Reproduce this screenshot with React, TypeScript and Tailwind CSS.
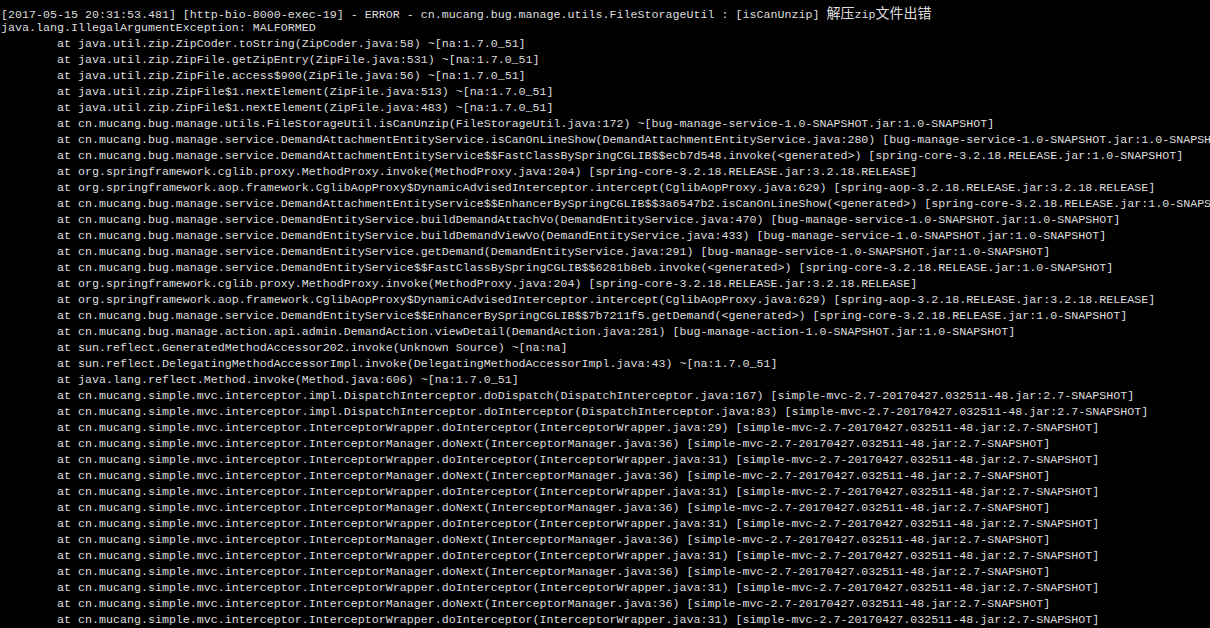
import React from 'react';

const T = '        ';

const head = '[2017-05-15 20:31:53.481] [http-bio-8000-exec-19] - ERROR - cn.mucang.bug.manage.utils.FileStorageUtil : [isCanUnzip] ';

const lines: string[] = [
    'java.lang.IllegalArgumentException: MALFORMED',
    'at java.util.zip.ZipCoder.toString(ZipCoder.java:58) ~[na:1.7.0_51]',
    'at java.util.zip.ZipFile.getZipEntry(ZipFile.java:531) ~[na:1.7.0_51]',
    'at java.util.zip.ZipFile.access$900(ZipFile.java:56) ~[na:1.7.0_51]',
    'at java.util.zip.ZipFile$1.nextElement(ZipFile.java:513) ~[na:1.7.0_51]',
    'at java.util.zip.ZipFile$1.nextElement(ZipFile.java:483) ~[na:1.7.0_51]',
    'at cn.mucang.bug.manage.utils.FileStorageUtil.isCanUnzip(FileStorageUtil.java:172) ~[bug-manage-service-1.0-SNAPSHOT.jar:1.0-SNAPSHOT]',
    'at cn.mucang.bug.manage.service.DemandAttachmentEntityService.isCanOnLineShow(DemandAttachmentEntityService.java:280) [bug-manage-service-1.0-SNAPSHOT.jar:1.0-SNAPSHOT]',
    'at cn.mucang.bug.manage.service.DemandAttachmentEntityService$$FastClassBySpringCGLIB$$ecb7d548.invoke(<generated>) [spring-core-3.2.18.RELEASE.jar:1.0-SNAPSHOT]',
    'at org.springframework.cglib.proxy.MethodProxy.invoke(MethodProxy.java:204) [spring-core-3.2.18.RELEASE.jar:3.2.18.RELEASE]',
    'at org.springframework.aop.framework.CglibAopProxy$DynamicAdvisedInterceptor.intercept(CglibAopProxy.java:629) [spring-aop-3.2.18.RELEASE.jar:3.2.18.RELEASE]',
    'at cn.mucang.bug.manage.service.DemandAttachmentEntityService$$EnhancerBySpringCGLIB$$3a6547b2.isCanOnLineShow(<generated>) [spring-core-3.2.18.RELEASE.jar:1.0-SNAPSHOT]',
    'at cn.mucang.bug.manage.service.DemandEntityService.buildDemandAttachVo(DemandEntityService.java:470) [bug-manage-service-1.0-SNAPSHOT.jar:1.0-SNAPSHOT]',
    'at cn.mucang.bug.manage.service.DemandEntityService.buildDemandViewVo(DemandEntityService.java:433) [bug-manage-service-1.0-SNAPSHOT.jar:1.0-SNAPSHOT]',
    'at cn.mucang.bug.manage.service.DemandEntityService.getDemand(DemandEntityService.java:291) [bug-manage-service-1.0-SNAPSHOT.jar:1.0-SNAPSHOT]',
    'at cn.mucang.bug.manage.service.DemandEntityService$$FastClassBySpringCGLIB$$6281b8eb.invoke(<generated>) [spring-core-3.2.18.RELEASE.jar:1.0-SNAPSHOT]',
    'at org.springframework.cglib.proxy.MethodProxy.invoke(MethodProxy.java:204) [spring-core-3.2.18.RELEASE.jar:3.2.18.RELEASE]',
    'at org.springframework.aop.framework.CglibAopProxy$DynamicAdvisedInterceptor.intercept(CglibAopProxy.java:629) [spring-aop-3.2.18.RELEASE.jar:3.2.18.RELEASE]',
    'at cn.mucang.bug.manage.service.DemandEntityService$$EnhancerBySpringCGLIB$$7b7211f5.getDemand(<generated>) [spring-core-3.2.18.RELEASE.jar:1.0-SNAPSHOT]',
    'at cn.mucang.bug.manage.action.api.admin.DemandAction.viewDetail(DemandAction.java:281) [bug-manage-action-1.0-SNAPSHOT.jar:1.0-SNAPSHOT]',
    'at sun.reflect.GeneratedMethodAccessor202.invoke(Unknown Source) ~[na:na]',
    'at sun.reflect.DelegatingMethodAccessorImpl.invoke(DelegatingMethodAccessorImpl.java:43) ~[na:1.7.0_51]',
    'at java.lang.reflect.Method.invoke(Method.java:606) ~[na:1.7.0_51]',
    'at cn.mucang.simple.mvc.interceptor.impl.DispatchInterceptor.doDispatch(DispatchInterceptor.java:167) [simple-mvc-2.7-20170427.032511-48.jar:2.7-SNAPSHOT]',
    'at cn.mucang.simple.mvc.interceptor.impl.DispatchInterceptor.doInterceptor(DispatchInterceptor.java:83) [simple-mvc-2.7-20170427.032511-48.jar:2.7-SNAPSHOT]',
    'at cn.mucang.simple.mvc.interceptor.InterceptorWrapper.doInterceptor(InterceptorWrapper.java:29) [simple-mvc-2.7-20170427.032511-48.jar:2.7-SNAPSHOT]',
];

const manager = 'at cn.mucang.simple.mvc.interceptor.InterceptorManager.doNext(InterceptorManager.java:36) [simple-mvc-2.7-20170427.032511-48.jar:2.7-SNAPSHOT]';
const wrapper = 'at cn.mucang.simple.mvc.interceptor.InterceptorWrapper.doInterceptor(InterceptorWrapper.java:31) [simple-mvc-2.7-20170427.032511-48.jar:2.7-SNAPSHOT]';
for (let i = 0; i < 6; i++) {
    lines.push(manager, wrapper);
}

const Cjk = ({ children }: { children: string }) => (
    <span className="text-[14px] leading-4 font-['Noto_Sans_CJK_SC',sans-serif]">{children}</span>
);

const App = () => {
    return (
        <div className="w-[1210px] h-[628px] bg-black overflow-hidden">
            <div className="pt-1 pl-px text-[#dedede] text-[11.667px] leading-4 whitespace-pre font-['Liberation_Mono','Courier_New',monospace]">
                <div className="h-4">
                    {head}
                    <Cjk>解压</Cjk>zip<Cjk>文件出错</Cjk>
                </div>
                {lines.map((line, index) => (
                    <div key={index} className="h-4">
                        {line.startsWith('at ') ? T + line : line}
                    </div>
                ))}
            </div>
        </div>
    );
};

export default App;
